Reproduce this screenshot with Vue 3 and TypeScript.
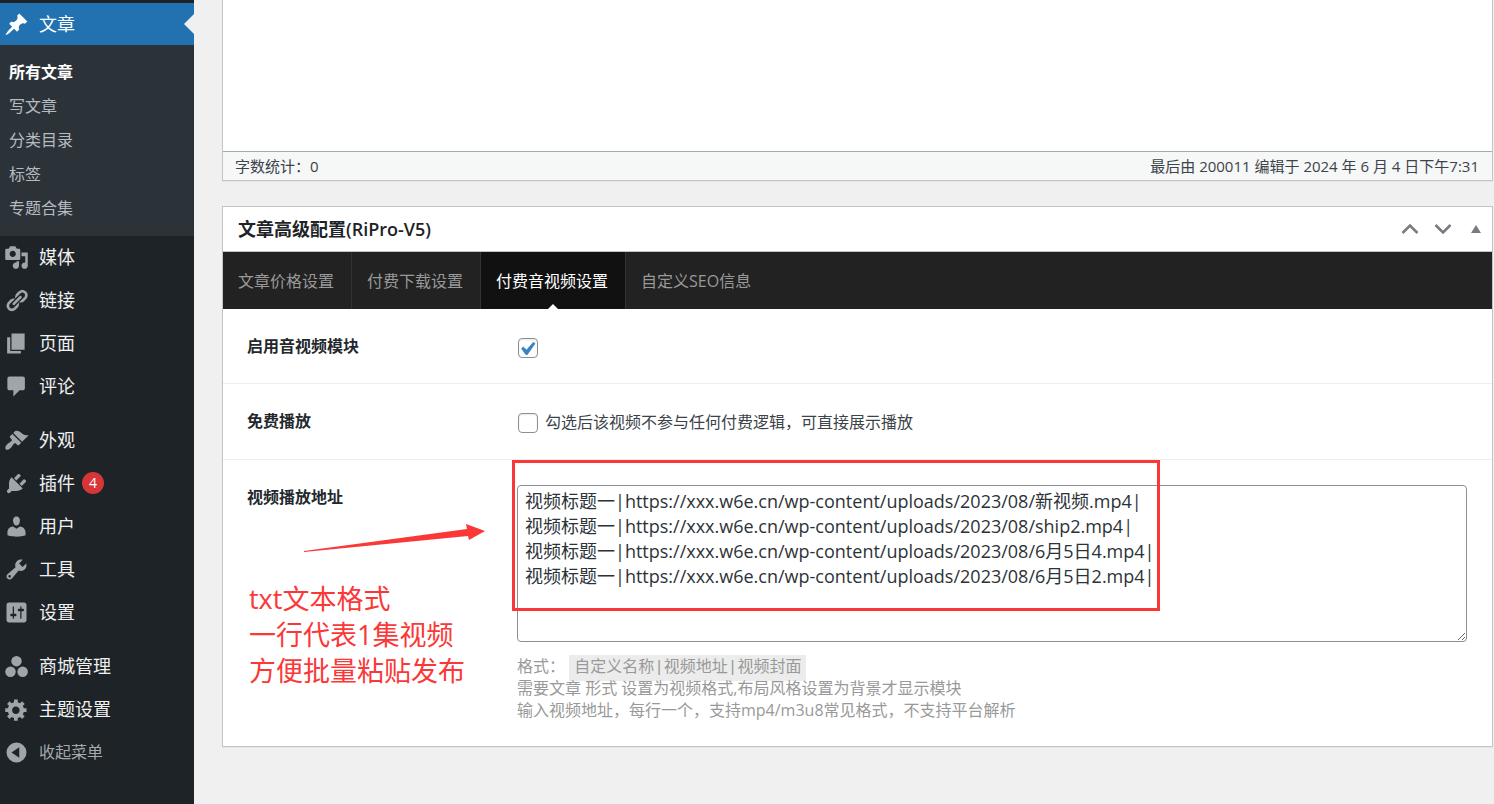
<script setup lang="ts">
import { ref } from 'vue'

interface MenuItem {
  label: string
  icon: string
  badge?: number
  muted?: boolean
}

const icons = {
  pin: 'M10.44 3.02l1.82-1.82 6.36 6.35-1.83 1.82c-1.05-.68-2.48-.57-3.41.36l-.75.75c-.92.93-1.04 2.35-.35 3.41l-1.83 1.82-2.41-2.41-2.8 2.79c-.42.42-3.38 2.71-3.8 2.29s1.86-3.39 2.28-3.81l2.79-2.79L4.1 9.36l1.83-1.82c1.05.69 2.48.57 3.4-.36l.75-.75c.93-.92 1.05-2.35.36-3.41z',
  media: 'M13 11V4c0-.55-.45-1-1-1h-1.67L9 1H5L3.67 3H2c-.55 0-1 .45-1 1v7c0 .55.45 1 1 1h10c.55 0 1-.45 1-1zM7 4.5c1.38 0 2.5 1.12 2.5 2.5S8.38 9.5 7 9.5 4.5 8.38 4.5 7 5.62 4.5 7 4.5zM14 6h5v10.5c0 1.38-1.12 2.5-2.5 2.5S14 17.88 14 16.5s1.12-2.5 2.5-2.5c.17 0 .34.02.5.05V9h-3V6zm-4 8.05V13h2v3.5c0 1.38-1.12 2.5-2.5 2.5S7 17.88 7 16.5 8.12 14 9.5 14c.17 0 .34.02.5.05z',
  link: 'M17.74 2.76c1.68 1.69 1.68 4.41 0 6.1l-1.53 1.52c-1.12 1.12-2.7 1.47-4.14 1.09l2.62-2.61.76-.77.76-.76c.84-.84.84-2.2 0-3.04-.84-.85-2.2-.85-3.04 0l-.77.76-3.38 3.38c-.37-1.44-.02-3.02 1.1-4.14l1.52-1.53c1.69-1.68 4.42-1.68 6.1 0zM8.59 13.43l5.34-5.34c.42-.42.42-1.1 0-1.52-.44-.43-1.13-.39-1.53 0l-5.33 5.34c-.42.42-.42 1.1 0 1.52.44.43 1.13.39 1.52 0zm-.76 2.29l4.14-4.15c.38 1.44.03 3.02-1.09 4.14l-1.52 1.53c-1.69 1.68-4.41 1.68-6.1 0-1.68-1.68-1.68-4.42 0-6.1l1.53-1.52c1.12-1.12 2.7-1.47 4.14-1.1l-4.14 4.15c-.85.84-.85 2.2 0 3.05.84.84 2.2.84 3.04 0z',
  page: 'M6 15V2h10.500v13H6zm-1 1h8.500v2H2.500V5H5v11z',
  comment: 'M4.500 2h10.500c1.100 0 1.700.7 1.700 1.700v7.600c0 1.100-.7 1.700-1.700 1.700h-2.500l-5 5v-5H4.500c-1.100 0-1.800-.7-1.800-1.700V3.700C2.700 2.700 3.400 2 4.500 2z',
  brush: 'M14.48 11.06L7.41 3.99l1.5-1.5c.5-.56 2.3-.47 3.51.32 1.21.8 1.43 1.28 2.91 2.1 1.18.64 2.45 1.26 4.45.85zm-.71.71L6.7 4.7 4.93 6.47c-.39.39-.39 1.02 0 1.41l1.06 1.06c.39.39.39 1.03 0 1.42-.6.6-1.43 1.11-2.21 1.69-.35.26-.7.53-1.01.84C1.43 14.23.4 16.08 1.4 17.07c.99 1 2.84-.03 4.18-1.36.31-.31.58-.66.85-1.02.57-.78 1.08-1.61 1.69-2.21.39-.39 1.02-.39 1.41 0l1.06 1.06c.39.39 1.02.39 1.41 0z',
  plug: 'M13.11 4.36L9.87 7.6 8 5.73l3.24-3.24c.35-.34 1.05-.2 1.56.32.52.51.66 1.21.31 1.55zm-8 1.77l.91-1.12 9.01 9.01-1.19.84c-.71.71-2.63 1.16-3.82 1.16H6.14L4.9 17.26c-.59.59-1.54.59-2.12 0-.59-.58-.59-1.53 0-2.12l1.24-1.24v-3.88c0-1.13.4-3.19 1.09-3.89zm7.26 3.97l3.24-3.24c.34-.35 1.04-.21 1.55.31.52.51.66 1.21.31 1.55l-3.24 3.25z',
  user: 'M10 9.25c-2.27 0-2.73-3.44-2.73-3.44C7 4.02 7.82 2 9.97 2c2.16 0 2.98 2.02 2.71 3.81 0 0-.41 3.44-2.68 3.44zm0 2.57L12.72 10c2.39 0 4.52 2.33 4.52 4.53v2.49s-3.65 1.13-7.24 1.13c-3.65 0-7.24-1.13-7.24-1.13v-2.49c0-2.25 1.94-4.48 4.47-4.48z',
  wrench: 'M16.68 9.77c-1.34 1.34-3.3 1.67-4.95.99l-5.41 6.52c-.99.99-2.59.99-3.58 0s-.99-2.59 0-3.57l6.52-5.42c-.68-1.65-.35-3.61.99-4.95 1.28-1.28 3.12-1.62 4.72-1.06l-2.89 2.89 2.82 2.82 2.86-2.87c.53 1.58.18 3.39-1.08 4.65zM3.81 16.21c.4.39 1.04.39 1.43 0 .4-.4.4-1.04 0-1.43-.39-.4-1.03-.4-1.43 0-.39.39-.39 1.03 0 1.43z',
  sliders: 'M18 16V4c0-1.1-.9-2-2-2H4c-1.1 0-2 .9-2 2v12c0 1.1.9 2 2 2h12c1.1 0 2-.9 2-2zM8 11h1c.55 0 1 .45 1 1s-.45 1-1 1H8v1.5c0 .28-.22.5-.5.5s-.5-.22-.5-.5V13H6c-.55 0-1-.45-1-1s.45-1 1-1h1V5.500c0-.28.22-.5.5-.5s.5.22.5.5V11zm5-2h-1c-.55 0-1-.45-1-1s.45-1 1-1h1V5.500c0-.28.22-.5.5-.5s.5.22.5.5V7h1c.55 0 1 .45 1 1s-.45 1-1 1h-1v5.500c0 .28-.22.5-.5.5s-.5-.22-.5-.5V9z',
  balls: 'M10 1.500a4.200 4.200 0 1 1 0 8.400a4.200 4.200 0 0 1 0-8.400zM5.200 10a4.200 4.200 0 1 1 0 8.400a4.200 4.200 0 0 1 0-8.400zM14.900 10a4.200 4.200 0 1 1 0 8.400a4.200 4.200 0 0 1 0-8.400z',
  gear: 'M18 12h-2.18c-.17.7-.44 1.35-.81 1.93l1.54 1.54-2.1 2.1-1.54-1.54c-.58.36-1.23.63-1.91.79V19H8v-2.18c-.68-.16-1.33-.43-1.91-.79l-1.54 1.54-2.12-2.12 1.54-1.54c-.36-.58-.63-1.23-.79-1.91H1V9.03h2.17c.16-.7.44-1.35.8-1.94L2.43 5.55l2.1-2.1 1.54 1.54c.58-.37 1.24-.64 1.93-.81V2h3v2.18c.68.16 1.33.43 1.91.79l1.54-1.54 2.12 2.12-1.54 1.54c.36.59.64 1.24.8 1.94H18V12zm-8.5 1.5c1.66 0 3-1.34 3-3s-1.34-3-3-3-3 1.34-3 3 1.34 3 3 3z',
  collapse: 'M10 2a8 8 0 1 1 0 16a8 8 0 0 1 0-16zM12.200 5.800L6 10l6.200 4.200z',
}

const submenu = ['所有文章', '写文章', '分类目录', '标签', '专题合集']

const groups: MenuItem[][] = [
  [
    { label: '媒体', icon: icons.media },
    { label: '链接', icon: icons.link },
    { label: '页面', icon: icons.page },
    { label: '评论', icon: icons.comment },
  ],
  [
    { label: '外观', icon: icons.brush },
    { label: '插件', icon: icons.plug, badge: 4 },
    { label: '用户', icon: icons.user },
    { label: '工具', icon: icons.wrench },
    { label: '设置', icon: icons.sliders },
  ],
  [
    { label: '商城管理', icon: icons.balls },
    { label: '主题设置', icon: icons.gear },
    { label: '收起菜单', icon: icons.collapse, muted: true },
  ],
]

const tabs = ['文章价格设置', '付费下载设置', '付费音视频设置', '自定义SEO信息']
const activeTab = ref(2)
const enabled = ref(true)
const free = ref(false)
const content = ref('')
const base = '视频标题一|https://xxx.w6e.cn/wp-content/uploads/2023/08/'
const urls = ref(['新视频', 'ship2', '6月5日4', '6月5日2'].map((n) => `${base}${n}.mp4|`).join('\n'))
const notes = ['txt文本格式', '一行代表1集视频', '方便批量粘贴发布']
</script>

<template>
  <div class="admin">
    <nav class="sidebar" aria-label="主菜单">
      <a href="#" class="item current">
        <svg class="icon" viewBox="0 0 20 20" aria-hidden="true"><path :d="icons.pin" /></svg>
        <span class="label">文章</span>
      </a>
      <ul class="submenu">
        <li v-for="(s, i) in submenu" :key="s"><a href="#" :class="{ on: i === 0 }">{{ s }}</a></li>
      </ul>
      <ul v-for="(g, gi) in groups" :key="gi" class="group">
        <li v-for="m in g" :key="m.label">
          <component :is="m.muted ? 'button' : 'a'" :href="m.muted ? undefined : '#'" class="item" :class="{ muted: m.muted }">
            <svg class="icon" viewBox="0 0 20 20" aria-hidden="true"><path fill-rule="evenodd" :d="m.icon" /></svg>
            <span class="label">{{ m.label }}</span>
            <span v-if="m.badge" class="badge">{{ m.badge }}</span>
          </component>
        </li>
      </ul>
    </nav>

    <main class="main">
      <section class="editor">
        <textarea v-model="content" class="canvas" aria-label="文章内容"></textarea>
        <div class="status">
          <span>字数统计：0</span>
          <span>最后由 200011 编辑于 2024 年 6 月 4 日下午7:31</span>
        </div>
      </section>

      <section class="box">
        <header class="head">
          <h2>文章高级配置(RiPro-V5)</h2>
          <div class="actions">
            <button type="button" aria-label="上移">
              <svg width="18" height="12" viewBox="0 0 18 12"><path d="M1.500 10L9 2.500L16.500 10" fill="none" stroke="#787c82" stroke-width="2.600" /></svg>
            </button>
            <button type="button" aria-label="下移">
              <svg width="18" height="12" viewBox="0 0 18 12"><path d="M1.500 2L9 9.500L16.500 2" fill="none" stroke="#787c82" stroke-width="2.600" /></svg>
            </button>
            <button type="button" aria-label="切换面板">
              <svg width="10" height="8" viewBox="0 0 10 8"><path d="M5 0L10 8H0z" fill="#787c82" /></svg>
            </button>
          </div>
        </header>

        <div class="tabs" role="tablist">
          <button
            v-for="(t, i) in tabs"
            :key="t"
            type="button"
            role="tab"
            :aria-selected="i === activeTab"
            :class="{ active: i === activeTab }"
            @click="activeTab = i"
          >{{ t }}</button>
        </div>

        <div class="row">
          <label class="title" for="enable">启用音视频模块</label>
          <div class="field"><input id="enable" v-model="enabled" type="checkbox" /></div>
        </div>

        <div class="row">
          <span class="title">免费播放</span>
          <label class="field check">
            <input v-model="free" type="checkbox" />
            <span>勾选后该视频不参与任何付费逻辑，可直接展示播放</span>
          </label>
        </div>

        <div class="row">
          <label class="title" for="urls">视频播放地址</label>
          <div class="field">
            <textarea id="urls" v-model="urls" class="urls" rows="6" spellcheck="false"></textarea>
            <p class="help">
              格式： <code>自定义名称|视频地址|视频封面</code><br />
              需要文章 形式 设置为视频格式,布局风格设置为背景才显示模块<br />
              输入视频地址，每行一个，支持mp4/m3u8常见格式，不支持平台解析
            </p>
            <div class="frame"></div>
          </div>
          <svg class="arrow" width="182" height="28" viewBox="0 0 182 28" aria-hidden="true">
            <path d="M0 27L163 5L162 0L181 7L165 16L164 12L0 28z" fill="#fb3838" />
          </svg>
          <div class="notes">
            <div v-for="n in notes" :key="n">{{ n }}</div>
          </div>
        </div>
      </section>
    </main>
  </div>
</template>

<style>
body {
  background: #f0f0f1;
}
</style>

<style scoped>
.admin {
  display: flex;
  min-height: 100vh;
  font-family: "Open Sans", "Noto Sans CJK SC", sans-serif;
  color: #3c434a;
  box-sizing: border-box;
}
.admin *,
.admin *::before,
.admin *::after {
  box-sizing: border-box;
}
ul {
  list-style: none;
  margin: 0;
  padding: 0;
}
a {
  text-decoration: none;
}
button {
  border: 0;
  background: none;
  padding: 0;
  font-family: inherit;
  cursor: pointer;
}

.sidebar {
  flex: none;
  width: 194px;
  padding-top: 3px;
  background: #1d2327;
}
.item {
  display: flex;
  align-items: center;
  width: 100%;
  height: 42px;
  padding-left: 4px;
  font-size: 18px;
  color: #f0f0f1;
}
.icon {
  width: 25px;
  height: 25px;
  margin-right: 10px;
  fill: #a0a5aa;
}
.label {
  padding-bottom: 2px;
}
.current {
  position: relative;
  background: #2271b1;
  color: #fff;
}
.current .icon {
  fill: #fff;
}
.current::after {
  content: "";
  position: absolute;
  right: 0;
  top: 11px;
  border: 10px solid transparent;
  border-left: 0;
  border-right-color: #f0f0f1;
}
.submenu {
  padding: 10px 0 11px 9px;
  background: #2c3338;
}
.submenu a {
  display: block;
  font-size: 16px;
  line-height: 34px;
  color: #b5bbc0;
}
.submenu .on {
  color: #fff;
  font-weight: 700;
}
.group {
  display: grid;
  gap: 1px;
  margin-bottom: 12px;
}
.item.muted {
  padding-left: 4px;
  font-size: 16px;
  color: #a7aaad;
}
.badge {
  width: 22px;
  height: 22px;
  margin-left: 7px;
  border-radius: 50%;
  background: #d63638;
  color: #fff;
  font-size: 14px;
  line-height: 22px;
  text-align: center;
}

.main {
  flex: 1;
  min-width: 0;
  padding: 0 1px 0 28px;
}
.editor,
.box {
  background: #fff;
  border: 1px solid #c3c4c7;
  box-shadow: 0 1px 1px rgba(0, 0, 0, 0.04);
}
.editor {
  border-top: 0;
}
.canvas {
  display: block;
  width: 100%;
  height: 151px;
  border: 0;
  resize: none;
  outline: none;
}
.status {
  display: flex;
  justify-content: space-between;
  padding: 0 13px 0 12px;
  border-top: 1px solid #a7aaad;
  background: #f6f7f7;
  font-size: 15px;
  line-height: 28px;
}
.box {
  margin-top: 25px;
}
.head {
  display: flex;
  align-items: center;
  justify-content: space-between;
  height: 45px;
  padding: 0 11px 0 15px;
  border-bottom: 1px solid #c3c4c7;
}
h2 {
  margin: 0;
  padding-bottom: 2px;
  font-size: 18px;
  font-weight: 600;
  color: #1d2327;
}
.actions {
  display: flex;
  align-items: center;
  gap: 15px;
}
.actions button {
  display: flex;
}
.actions button:last-child {
  margin-left: 4px;
}

.tabs {
  display: flex;
  background: #222;
}
.tabs button {
  position: relative;
  height: 57px;
  padding: 0 17px 2px 15px;
  border-right: 1px solid #333;
  font-size: 16px;
  color: #999;
}
.tabs button:last-child {
  border-right: 0;
}
.tabs .active {
  background: #111;
  color: #fff;
}
.tabs .active::after {
  content: "";
  position: absolute;
  left: 50%;
  bottom: 0;
  margin-left: -5px;
  border: 5px solid transparent;
  border-top: 0;
  border-bottom-color: #fff;
}

.row {
  position: relative;
  display: grid;
  grid-template-columns: 270px 1fr;
  padding: 25px 25px 25px 24px;
}
.row + .row {
  border-top: 1px solid #eee;
}
.title {
  font-size: 16px;
  line-height: 24px;
  font-weight: 700;
  color: #23282d;
}
.field {
  position: relative;
  min-width: 0;
}
input[type="checkbox"] {
  appearance: none;
  display: block;
  flex: none;
  width: 20px;
  height: 20px;
  margin: 4px 0 0 1px;
  border: 1px solid #8c8f94;
  border-radius: 4px;
  background: #fff;
  box-shadow: inset 0 1px 2px rgba(0, 0, 0, 0.1);
}
input[type="checkbox"]:checked {
  background: #fff url("data:image/svg+xml,%3Csvg xmlns='http://www.w3.org/2000/svg' viewBox='0 0 20 20'%3E%3Cpath d='M14.830 4.890l1.340.940-5.810 8.380H9.020L5.780 9.670l1.340-1.250 2.570 2.400z' fill='%233582c4' stroke='%233582c4' stroke-width='.5'/%3E%3C/svg%3E") -5px -3px / 26px no-repeat;
}
.check {
  display: flex;
  gap: 7px;
  font-size: 16px;
  line-height: 23px;
}
.check span {
  padding-top: 2px;
}
.urls {
  display: block;
  width: 100%;
  margin: 0;
  padding: 3px 7px 2px;
  border: 1px solid #8c8f94;
  border-radius: 4px;
  background: #fff;
  font-family: inherit;
  font-size: 18px;
  line-height: 25px;
  color: #2c3338;
  resize: vertical;
}
.help {
  margin: 13px 0 0;
  font-size: 16px;
  line-height: 22px;
  color: #999;
}
code {
  padding: 4px 5px;
  background: #ececec;
  font-family: "Liberation Mono", "Noto Sans CJK SC", monospace;
  font-size: 16px;
  line-height: 16px;
}
.frame {
  position: absolute;
  left: -5px;
  top: -25px;
  width: 648px;
  height: 151px;
  border: 3px solid #fb3838;
  pointer-events: none;
}
.arrow {
  position: absolute;
  left: 81px;
  top: 64px;
}
.notes {
  position: absolute;
  left: 26px;
  top: 121px;
  font-size: 27px;
  line-height: 36px;
  color: #fb3838;
}
</style>
